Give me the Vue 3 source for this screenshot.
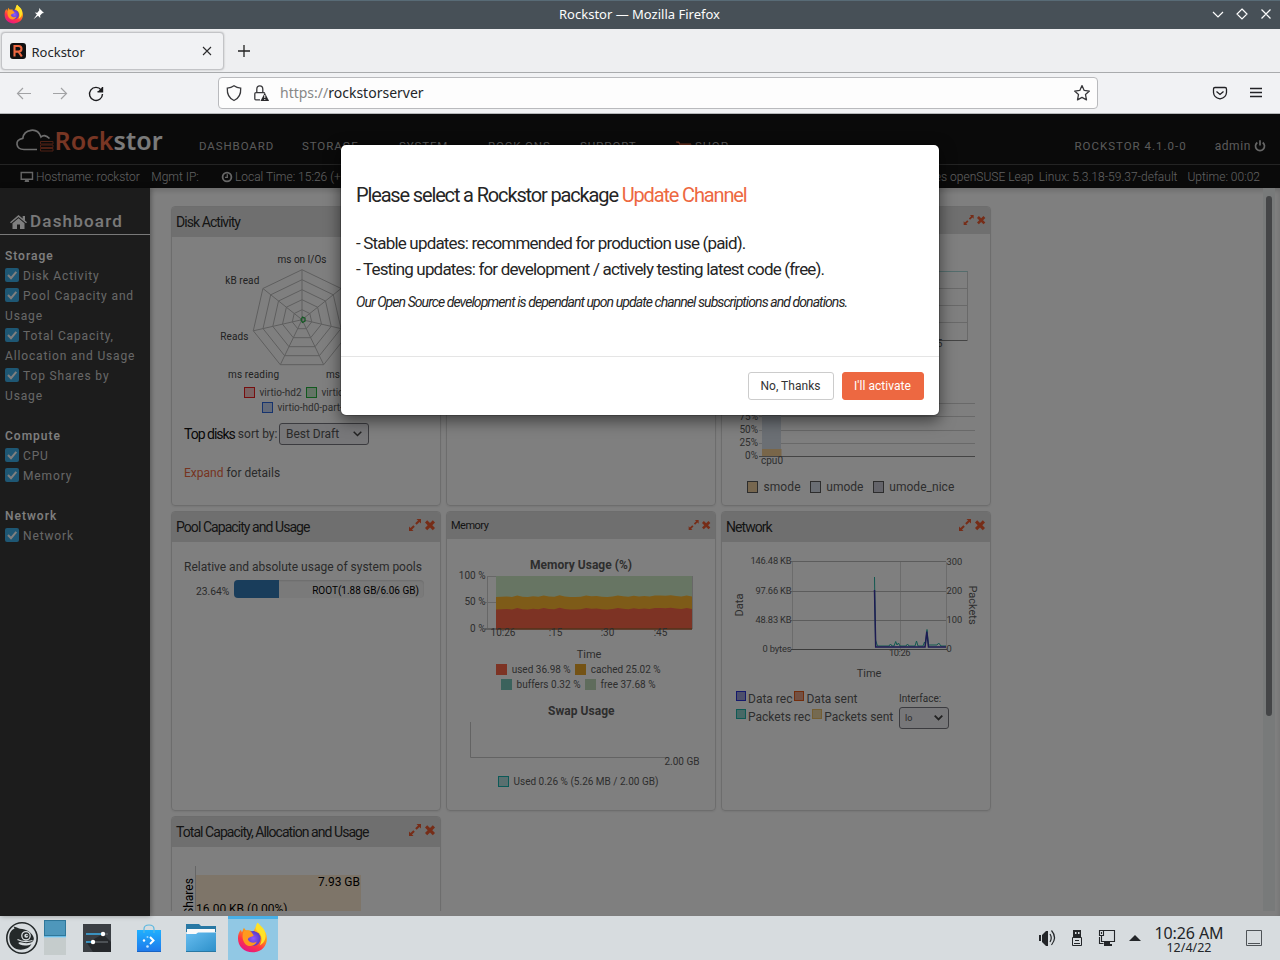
<script setup>
const menu = [
  { label: 'DASHBOARD' },
  { label: 'STORAGE', caret: true },
  { label: 'SYSTEM', caret: true },
  { label: 'ROCK-ONS' },
  { label: 'SUPPORT', caret: true },
  { label: 'SHOP', cart: true },
]

const sections = [
  { title: 'Storage', items: ['Disk Activity', 'Pool Capacity and Usage', 'Total Capacity, Allocation and Usage', 'Top Shares by Usage'] },
  { title: 'Compute', items: ['CPU', 'Memory'] },
  { title: 'Network', items: ['Network'] },
]

const radarPoint = (k, r) => {
  const a = (k * 2 * Math.PI) / 7
  return [302 + r * Math.sin(a), 319.7 - r * Math.cos(a)]
}
const axes = [0, 1, 2, 3, 4, 5, 6]
const rings = [10, 20, 30, 40, 50].map((r) => axes.map((k) => radarPoint(k, r).map((v) => v.toFixed(1)).join(',')).join(' '))
const spokes = axes.map((k) => radarPoint(k, 50))

const wobble = [0, 0.2, 0.6, 0, 1.6, 0.2, 0, 0.7, 0.3, 1.4, 0.4, 0.2, 1.8, 0.6, 0, 0, 0.2, 1.6, 0.8, 0.9, 0.2, 0, 0.4, 1.5, 0.8, 0.2, 1.2, 0.6, 1, 0.6, 1.4, 1.6, 1.2, 1.8, 1, 0.6, 1.4, 0.4]
const area = (base) =>
  'M496 628.5 ' + wobble.map((w, i) => `L${(496 + (i * 196) / (wobble.length - 1)).toFixed(1)} ${(base - w).toFixed(1)}`).join(' ') + ' L692 628.5Z'
</script>

<template>
  <div class="desktop">
    <header class="titlebar">
      <svg class="tb-left" viewBox="0 0 50 29" width="50" height="29">
        <defs>
          <linearGradient id="fxg" x1=".8" y1="0" x2=".3" y2="1">
            <stop offset="0" stop-color="#fff44f" /><stop offset=".4" stop-color="#ff980e" /><stop offset=".7" stop-color="#ff3647" /><stop offset="1" stop-color="#e31587" />
          </linearGradient>
          <radialGradient id="fxp"><stop offset="0" stop-color="#9059ff" /><stop offset="1" stop-color="#5b3bc4" /></radialGradient>
          <symbol id="fox" viewBox="0 0 32 32">
            <path d="M19 5C20 3 20 2 21 1C24 5 27 7 29 11C33 20 28 31 16 31C7 31 1 25 1 17C1 13 2 10 4 8L5 11L7 6L9 9C13 8 15 9 16 11C17 9 18 7 19 5Z" fill="url(#fxg)" />
            <circle cx="16.5" cy="17" r="7.5" fill="url(#fxp)" />
            <path d="M7 9C10 9 13 9 15 11L17 14C15 16 12 15 11 18C13 22 18 22 20 20C19 24 12 27 8 22C5 18 5 13 7 9Z" fill="#ff9a1e" />
            <path d="M21 1C17 7 20 9 23 12C26 16 25 21 23 24C31 20 30 10 26 6Z" fill="#ffe226" />
          </symbol>
        </defs>
        <use href="#fox" x="4" y="4" width="20" height="20" />
        <path d="M39 8l5 5-1.800.300-2.100 2.100.200 2.600-2.300-2.200-4.500 3.500 3.400-4.700-2.100-2.100 2.500.200 2-2.400Z" fill="#fff" />
      </svg>
      <span class="tb-title">Rockstor — Mozilla Firefox</span>
      <svg class="tb-right" viewBox="1200 0 80 29" width="80" height="29" fill="none" stroke="#fcfcfc" stroke-width="1.2">
        <path d="M1213 12l5 5 5-5M1242 9l5 5-5 5-5-5ZM1261.500 9.500l9 9M1270.500 9.500l-9 9" />
      </svg>
    </header>

    <div class="tabs">
      <div class="tab">
        <svg width="16" height="16" viewBox="0 0 16 16"><rect width="16" height="16" rx="3" fill="#111" /><path d="M4.500 13.500V3H8.500Q11.500 3 11.500 5.800T8.500 8.600H5M8.500 8.600L11.800 13.500" fill="none" stroke="#ed6841" stroke-width="2.100" /></svg>
        <span>Rockstor</span>
        <svg class="tab-x" width="10" height="10" viewBox="0 0 10 10"><path d="M1 1l8 8M9 1l-8 8" stroke="#2b2b2d" stroke-width="1.100" /></svg>
      </div>
      <svg class="plus" width="12" height="12" viewBox="0 0 12 12"><path d="M6 0v12M0 6h12" stroke="#222" stroke-width="1.300" /></svg>
    </div>

    <div class="toolbar">
      <svg class="nav-icons" width="218" height="40" viewBox="0 73 218 40" fill="none">
        <path d="M31 93.500H17.500M23 88l-5.500 5.500 5.500 5.500M53 93.500H66.500M61 88l5.500 5.500-5.500 5.500" stroke="#a2a3a5" stroke-width="1.200" />
        <path d="M101.200 90A6.500 6.500 0 1 0 102.500 94M102.500 87v4.800H97.500" stroke="#1c1c1e" stroke-width="1.400" /><path d="M102.500 87v4.800h-4.800Z" fill="#1c1c1e" />
      </svg>
      <div class="url">
        <svg width="52" height="20" viewBox="226 83 52 20" fill="none" stroke="#39393c" stroke-width="1.300">
          <path d="M234 85.800C236 87.300 238 88 240.700 88.200C241 93.500 239.500 98 234 100.500C228.500 98 227 93.500 227.300 88.200C230 88 232 87.300 234 85.800Z" />
          <path d="M260 99.800h-4.200q-1 0-1-1v-5q0-1.200 1.200-1.200h7.500q1.200 0 1.200.8M256.800 92.500v-3.300q0-3.400 3-3.400t3 3.400v3.300" />
          <path d="M264.800 92.700l4.300 8.200h-8.600Z" fill="#2a2a2c" stroke="none" /><path d="M264.800 95v3M264.800 99v1" stroke="#fff" stroke-width="1" />
        </svg>
        <span class="addr"><i>https://</i>rockstorserver</span>
        <svg class="star" width="18" height="18" viewBox="0 0 18 18"><path d="M9 1.600l2.200 4.800 5.200.7-3.900 3.500 1 5.300L9 13.400l-4.500 2.500 1-5.300L1.600 7.100l5.200-.7Z" fill="none" stroke="#39393c" stroke-width="1.300" stroke-linejoin="round" /></svg>
      </div>
      <svg class="right-icons" width="60" height="40" viewBox="1206 73 60 40" fill="none" stroke="#222225" stroke-width="1.300">
        <path d="M1215 87.500h10q1.500 0 1.500 1.500v3.500q-.3 5-6.500 6.300q-6.200-1.300-6.500-6.300V89q0-1.500 1.500-1.500ZM1216.500 91.500l3.500 3 3.500-3M1250 88.500h12M1250 92.500h12M1250 96.500h12" />
      </svg>
    </div>

    <div class="page">
      <nav class="navbar">
        <svg class="logo" width="154" height="40" viewBox="12 120 154 40">
          <path d="M49.500 138.500C46 135 43 135 41 137C39 131.500 35 129.800 31 130.300C26 131 23.300 134 22.800 138.300C18.500 139 16.500 141.500 17 144.500C17.500 148 20 149.500 24 149.500H37" fill="none" stroke="#dadada" stroke-width="1.700" />
          <g fill="none" stroke="#9d4029" stroke-width="1"><path d="M40.500 141.500h12.500v2.500h-12.500ZM40.500 145h12.500v2.500h-12.500ZM40.500 148.500h12.500v2.500h-12.500Z" /></g>
          <text x="54.500" y="149.500" textLength="108" class="brand"><tspan fill="#f06d48">Rock</tspan><tspan fill="#f4f4f4">stor</tspan></text>
        </svg>
        <ul class="menu">
          <li v-for="m in menu" :key="m.label">
            <svg v-if="m.cart" width="16" height="12" viewBox="0 0 16 12"><path d="M0 1h3l2 7h8l2-5H4" fill="#ed6841" stroke="#ed6841" /><circle cx="6" cy="10.500" r="1.300" fill="#ed6841" /><circle cx="12" cy="10.500" r="1.300" fill="#ed6841" /></svg>
            {{ m.label }}<b v-if="m.caret" class="caret"></b>
          </li>
        </ul>
        <div class="account"><span class="ver">ROCKSTOR 4.1.0-0</span><span class="admin">admin</span>
          <svg width="12" height="12" viewBox="0 0 12 12" fill="none" stroke="#ccc" stroke-width="1.700"><path d="M3.300 2.500A4.500 4.500 0 1 0 8.700 2.500M6 .3V5.500" /></svg>
        </div>
      </nav>
      <div class="infobar">
        <svg width="14" height="12" viewBox="0 0 14 12"><path d="M1.200 1.500h11.300v6.800H1.200Z" fill="none" stroke="#ccc" stroke-width="1.400" /><path d="M5.500 8h3l.7 3H4.500Z" fill="#ccc" /></svg>
        <span class="host">Hostname: rockstor</span><span class="mgmt">Mgmt IP:</span>
        <svg width="12" height="12" viewBox="0 0 12 12" fill="none" stroke="#ccc"><circle cx="6" cy="6" r="4.400" stroke-width="1.800" /><path d="M6.300 3.300v3H4" stroke-width="1.300" /></svg>
        <span class="time">Local Time: 15:26 (+</span>
        <span class="os">Uses openSUSE Leap</span><span class="kernel">Linux: 5.3.18-59.37-default</span><span>Uptime: 00:02</span>
      </div>

      <div class="columns">
        <aside>
          <h2>
            <svg width="17" height="14" viewBox="0 0 17 14" fill="#fff"><path d="M8.500 0L17 7.200l-1 1.100L8.500 2 1 8.300 0 7.200ZM12.700 1H15v4.500l-2.300-2ZM8.500 3.200L14.500 8.200V14H10V9.500H7V14H2.500V8.200Z" /></svg>Dashboard
          </h2>
          <section v-for="s in sections" :key="s.title">
            <h3>{{ s.title }}</h3>
            <p v-for="i in s.items" :key="i">
              <svg width="14" height="14" viewBox="0 0 14 14"><rect width="14" height="14" rx="2" fill="#3daee9" /><path d="M3 7l3 3.200 5.300-6.300" fill="none" stroke="#fff" stroke-width="2" /></svg>{{ i }}
            </p>
          </section>
        </aside>

        <main>
          <div class="grid">
            <article class="card">
              <h4>Disk Activity</h4>
              <svg class="chart" width="268" height="178" viewBox="172 237 268 178">
                <g fill="none" stroke="#bdbdbd"><polygon v-for="(r, n) in rings" :key="n" :points="r" /><line v-for="(p, n) in spokes" :key="'s' + n" x1="302" y1="319.700" :x2="p[0]" :y2="p[1]" /></g>
                <path d="M302.500 317l2.500 1.200v3l-2.500 1.300-1.500-2.500Z" fill="none" stroke="#2db34a" stroke-width="1.300" />
                <g class="t10 dark"><text x="277.500" y="263" textLength="49">ms on I/Os</text><text x="225.300" y="284" textLength="34">kB read</text><text x="220.300" y="340" textLength="28">Reads</text><text x="228" y="378" textLength="51">ms reading</text><text x="326" y="378">ms writing</text></g>
                <g class="t10"><rect x="244.500" y="387.500" width="10" height="10" fill="#f6c9c9" stroke="#ed1c1c" /><text x="259.500" y="396" textLength="42">virtio-hd2</text><rect x="306.500" y="387.500" width="10" height="10" fill="#c8e8cd" stroke="#22b33d" /><text x="321.500" y="396">virtio-hd1</text><rect x="262.500" y="402.500" width="10" height="10" fill="#c9d7f3" stroke="#2c67dd" /><text x="277.500" y="411">virtio-hd0-part-3</text></g>
              </svg>
              <div class="sort"><strong>Top disks</strong><span>sort by:</span>
                <div class="select wide">Best Draft<svg width="9" height="6" viewBox="0 0 9 6"><path d="M.700.700l3.800 3.800L8.300.700" fill="none" stroke="#444" stroke-width="1.500" /></svg></div>
              </div>
              <p class="details"><a>Expand</a> for details</p>
            </article>

            <article class="card"><h4 class="small">Top Shares by Usage</h4></article>

            <article class="card">
              <h4 class="small">CPU<svg class="tools" width="23" height="10" viewBox="0 0 26 12"><path d="M7.500 0H12v4.500L10.500 3 7.700 5.800 6.200 4.300 9 1.500ZM0 7.500L1.500 9 4.300 6.200 5.800 7.700 3 10.500 4.500 12H0ZM16 3.500L18.200 1.300 21 4 23.800 1.300 26 3.500 23.300 6.200 26 9 23.800 11.200 21 8.500 18.200 11.200 16 9 18.700 6.200Z" fill="#ed5a30" /></svg></h4>
              <svg class="chart" width="268" height="270" viewBox="722 234 268 270">
                <g fill="none" stroke="#d3d3d3"><path d="M760 288.500h207M760 305.500h207M760 322.500h207M967.500 271v69M759 403.500h216M759 416.500h216M759 430.500h216M759 443.500h216" /></g>
                <path d="M760 271.500h207.500" stroke="#a8dada" /><path d="M760 340.500h207.500M759 456.500h216" stroke="#888" />
                <rect x="762" y="403" width="19" height="46" fill="#d6dfe8" /><rect x="762" y="449" width="19.500" height="7" fill="#f3cc92" />
                <g class="t10 end"><text x="758" y="420">75%</text><text x="758" y="433">50%</text><text x="758" y="446">25%</text><text x="758" y="459">0%</text><text x="942.500" y="347">:45</text></g>
                <text class="t10" x="761" y="464" textLength="22">cpu0</text>
                <g class="t12"><g stroke="#5a5a5a"><rect x="747.500" y="481.500" width="10" height="11" fill="#efcf9e" /><rect x="810.500" y="481.500" width="10" height="11" fill="#d4dde9" /><rect x="873.500" y="481.500" width="10" height="11" fill="#c9c9d4" /></g>
                  <text x="763.500" y="491" textLength="37">smode</text><text x="826.300" y="491" textLength="37">umode</text><text x="889.300" y="491" textLength="65">umode_nice</text></g>
              </svg>
            </article>

            <article class="card">
              <h4>Pool Capacity and Usage<svg class="tools" width="26" height="12" viewBox="0 0 26 12"><path d="M7.500 0H12v4.500L10.500 3 7.700 5.800 6.200 4.300 9 1.500ZM0 7.500L1.500 9 4.300 6.200 5.800 7.700 3 10.500 4.500 12H0ZM16 3.500L18.200 1.300 21 4 23.800 1.300 26 3.500 23.300 6.200 26 9 23.800 11.200 21 8.500 18.200 11.200 16 9 18.700 6.200Z" fill="#ed5a30" /></svg></h4>
              <p class="pool-note">Relative and absolute usage of system pools</p>
              <div class="pool"><span>23.64%</span><div class="bar"><div class="fill"></div><em>ROOT(1.88 GB/6.06 GB)</em></div></div>
            </article>

            <article class="card">
              <h4 class="small">Memory<svg class="tools" width="23" height="10" viewBox="0 0 26 12"><path d="M7.500 0H12v4.500L10.500 3 7.700 5.800 6.200 4.300 9 1.500ZM0 7.500L1.500 9 4.300 6.200 5.800 7.700 3 10.500 4.500 12H0ZM16 3.500L18.200 1.300 21 4 23.800 1.300 26 3.500 23.300 6.200 26 9 23.800 11.200 21 8.500 18.200 11.200 16 9 18.700 6.200Z" fill="#ed5a30" /></svg></h4>
              <svg class="chart" width="268" height="270" viewBox="447 539 268 270">
                <text class="t12 bold" x="530" y="569" textLength="102">Memory Usage (%)</text>
                <path d="M487 576.500h9M485 602.500h11M487.500 576v52M692.500 576v53" stroke="#cfcfcf" /><path d="M485 629h11" stroke="#777" />
                <rect x="496" y="576" width="196" height="52.500" fill="#cfebc7" /><path :d="area(597)" fill="#fdb730" /><path :d="area(609.500)" fill="#fb6648" /><path d="M496 629h196" stroke="#a4552a" stroke-width="1.300" />
                <g class="t10 end"><text x="485.500" y="579">100 %</text><text x="485.500" y="605">50 %</text><text x="485.500" y="632">0 %</text></g>
                <g class="t10 mid"><text x="503" y="636">10:26</text><text x="555.500" y="636">:15</text><text x="607.500" y="636">:30</text><text x="660.500" y="636">:45</text></g>
                <text class="t11 mid" x="589" y="658">Time</text>
                <rect x="496" y="664" width="11" height="11" fill="#fb6648" /><rect x="575" y="664" width="11" height="11" fill="#e9a72b" /><rect x="501" y="679" width="11" height="11" fill="#77c4b8" /><rect x="585" y="679" width="11" height="11" fill="#bfd9b8" />
                <g class="t10"><text x="511.700" y="673" textLength="59">used 36.98 %</text><text x="590.700" y="673" textLength="70">cached 25.02 %</text><text x="516.500" y="688" textLength="64">buffers 0.32 %</text><text x="600.500" y="688" textLength="55">free 37.68 %</text></g>
                <text class="t12 bold" x="548" y="715" textLength="66.500">Swap Usage</text>
                <path d="M470.500 722v35.500H668" fill="none" stroke="#c7c7c7" />
                <text class="t10" x="664.500" y="765" textLength="35">2.00 GB</text>
                <rect x="498.500" y="776.500" width="10" height="10" fill="#b4dede" stroke="#18b5b0" /><text class="t10" x="513.500" y="785" textLength="145">Used 0.26 % (5.26 MB / 2.00 GB)</text>
              </svg>
            </article>

            <article class="card">
              <h4>Network<svg class="tools" width="26" height="12" viewBox="0 0 26 12"><path d="M7.500 0H12v4.500L10.500 3 7.700 5.800 6.200 4.300 9 1.500ZM0 7.500L1.500 9 4.300 6.200 5.800 7.700 3 10.500 4.500 12H0ZM16 3.500L18.200 1.300 21 4 23.800 1.300 26 3.500 23.300 6.200 26 9 23.800 11.200 21 8.500 18.200 11.200 16 9 18.700 6.200Z" fill="#ed5a30" /></svg></h4>
              <svg class="chart" width="268" height="143" viewBox="722 542 268 143">
                <path d="M792.500 562v87M900.500 562v87M946.500 562v87" stroke="#d9d9d9" /><path d="M791 561.500h155M791 591.500h155M791 620.500h155" stroke="#b9b9b9" /><path d="M791 649.500h156" stroke="#777" />
                <path d="M874.500 577L875.500 640 877.500 646H889L890.500 644 892 646H894L895.700 641.500 897 645 898.500 643 900 646H906L907.500 644 909 646H915L916.500 641 918 646H923L924.500 642 925.500 644 927 629.500 928.500 645H937L938.700 643 941 646H946" fill="none" stroke="#22b0a0" />
                <path d="M874.500 590L875.700 647H925L926.800 631.500 928.500 647H946" fill="none" stroke="#3b36a6" stroke-width="1.500" />
                <g class="t9 end"><text x="791.500" y="564" textLength="41">146.48 KB</text><text x="791.500" y="594" textLength="36">97.66 KB</text><text x="791.500" y="623" textLength="36">48.83 KB</text><text x="791.500" y="652" textLength="29">0 bytes</text></g>
                <g class="t9"><text x="946.500" y="565">300</text><text x="946.500" y="594">200</text><text x="946.500" y="623">100</text><text x="946.500" y="652">0</text><text x="889" y="656" textLength="21.500">10:26</text></g>
                <text class="t11 mid" x="869" y="677">Time</text><text class="t11 mid" transform="translate(743 605) rotate(-90)">Data</text><text class="t11 mid" transform="translate(968.500 605) rotate(90)">Packets</text>
              </svg>
              <div class="net">
                <svg width="162" height="40" viewBox="734 687 162 40">
                  <g><rect x="736.500" y="691.500" width="9" height="9" fill="#9a9fd6" stroke="#2a32d8" /><rect x="794.500" y="691.500" width="9" height="9" fill="#e6a184" stroke="#e65a18" /><rect x="736.500" y="709.500" width="9" height="9" fill="#8fd3cd" stroke="#1fb5aa" /><rect x="812.500" y="709.500" width="9" height="9" fill="#ead4a2" stroke="#e8bd66" /></g>
                  <g class="t12"><text x="748" y="703" textLength="44.500">Data rec</text><text x="806.500" y="703" textLength="51">Data sent</text><text x="748" y="721" textLength="62.500">Packets rec</text><text x="824.300" y="721" textLength="69">Packets sent</text></g>
                </svg>
                <label>Interface:<div class="select lo">lo<svg width="9" height="6" viewBox="0 0 9 6"><path d="M.700.700l3.800 3.800L8.300.700" fill="none" stroke="#444" stroke-width="1.800" /></svg></div></label>
              </div>
            </article>

            <article class="card">
              <h4>Total Capacity, Allocation and Usage<svg class="tools" width="26" height="12" viewBox="0 0 26 12"><path d="M7.500 0H12v4.500L10.500 3 7.700 5.800 6.200 4.300 9 1.500ZM0 7.500L1.500 9 4.300 6.200 5.800 7.700 3 10.500 4.500 12H0ZM16 3.500L18.200 1.300 21 4 23.800 1.300 26 3.500 23.300 6.200 26 9 23.800 11.200 21 8.500 18.200 11.200 16 9 18.700 6.200Z" fill="#ed5a30" /></svg></h4>
              <svg class="chart" width="268" height="120" viewBox="172 847 268 120">
                <path d="M195.500 866v90" stroke="#ccc" /><rect x="196" y="875" width="165" height="60" fill="#fdebd2" />
                <g class="t12 black"><text x="318" y="886" textLength="42">7.93 GB</text><text x="196" y="913" textLength="91.500">16.00 KB (0.00%)</text><text transform="translate(193 915) rotate(-90)" textLength="37">Shares</text></g>
              </svg>
            </article>
          </div>
        </main>
        <div class="scroll"><div class="thumb"></div></div>
      </div>

      <div class="backdrop"></div>
      <div class="modal">
        <div class="modal-body">
          <h1>Please select a Rockstor package <a>Update Channel</a></h1>
          <p class="opt">- Stable updates: recommended for production use (paid).</p>
          <p class="opt second">- Testing updates: for development / actively testing latest code (free).</p>
          <p class="note">Our Open Source development is dependant upon update channel subscriptions and donations.</p>
        </div>
        <div class="modal-foot"><button>No, Thanks</button><button class="primary">I'll activate</button></div>
      </div>
    </div>

    <footer class="taskbar">
      <svg width="278" height="44" viewBox="0 916 278 44">
        <defs><linearGradient id="bag" x2="0" y2="1"><stop offset="0" stop-color="#1fb0ff" /><stop offset="1" stop-color="#1f78ea" /></linearGradient><linearGradient id="fold" x2="1" y2="1"><stop offset="0" stop-color="#67bdf0" /><stop offset="1" stop-color="#2c8fc9" /></linearGradient></defs>
        <circle cx="22" cy="938" r="15.200" fill="none" stroke="#24292a" stroke-width="1.600" />
        <path d="M9.500 940C8.500 934 11 930 14.500 928.500L13.500 926.500C16 927 18 928 20 928.800C26 929 32.500 932.500 33.800 938C34.300 943 28 944 22 942.500C18 941.500 17.500 943 20 944.500C24 946.500 28.500 945.500 31.500 944C28.500 950 18 952 12.500 946.500C10.500 944.500 9.800 942.500 9.500 940Z" fill="#24292a" />
        <circle cx="26" cy="935.800" r="4.200" fill="#24292a" stroke="#d7dcdf" stroke-width="1.300" /><circle cx="26.300" cy="935.800" r="2" fill="#d7dcdf" /><circle cx="27" cy="935.500" r=".8" fill="#24292a" /><path d="M17.500 939.500Q24 943 32.500 940.500" fill="none" stroke="#d7dcdf" stroke-width="1.200" />
        <rect x="44.500" y="920.500" width="21" height="15" fill="#4e97bb" stroke="#2f789b" /><rect x="44" y="936.300" width="22" height="1" fill="#3daee9" /><rect x="44" y="938" width="22" height="17" fill="#c5cccc" />
        <rect x="83" y="924" width="28" height="28" fill="#3b3f44" /><path d="M87 943L103 934 111 942V952H93Z" fill="#25282b" /><path d="M86 934h17M86 942h7" stroke="#3daee9" stroke-width="1.700" /><path d="M103 934h5M93 942h15" stroke="#5a5f64" stroke-width="1.700" /><circle cx="103" cy="934" r="2.200" fill="#fff" /><circle cx="93" cy="942" r="2.200" fill="#fff" />
        <rect x="137" y="930" width="24" height="22" fill="url(#bag)" /><path d="M137 951.500h24" stroke="#1763c4" /><path d="M144 933v-4q0-4 5-4t5 4v4" fill="none" stroke="#5bb8e0" stroke-width="1.200" /><path d="M150 937l3.500 3.500L150 944" fill="none" stroke="#fff" stroke-width="2" /><circle cx="144" cy="940.500" r="1.200" fill="#fff" /><circle cx="147.500" cy="937" r="1" fill="#9ed8ff" /><circle cx="147.500" cy="946.500" r="1.300" fill="#c9e8ff" />
        <path d="M186 924h13l2 2h15v6h-30Z" fill="#2878a4" /><path d="M187 929h28v6h-28Z" fill="#fafafa" /><path d="M186 934h10l2-1.500h18V952h-30Z" fill="url(#fold)" /><path d="M186 951.500h30" stroke="#2878a4" />
        <rect x="228" y="916" width="50" height="44" fill="#91c8e4" /><rect x="228" y="916" width="50" height="3" fill="#48b0e8" />
        <use href="#fox" x="237" y="921.500" width="31.500" height="32" />
      </svg>
      <svg class="tray" width="115" height="44" viewBox="1030 916 115 44">
        <path d="M1039 935h2v6h-2ZM1042 935l4-4h2v15h-2l-4-4Z" fill="#232629" /><path d="M1050 934q2.500 4 0 8M1051.500 930.500q6 7 0 14.500" fill="none" stroke="#232629" stroke-width="1.200" />
        <path d="M1073 930h8v7h-8Z" fill="#232629" /><path d="M1075 932h1.500v2H1075ZM1078 932h1.500v2H1078Z" fill="#d7dcdf" /><path d="M1072.500 937.500h9v8h-9ZM1075 940.500h4M1074 943.500h6" fill="none" stroke="#232629" />
        <path d="M1104 930.500h10.500v11h-13v-5.500M1099.500 930.500h4v5h-4ZM1101.500 932v2M1099.500 937v6.500h4" fill="none" stroke="#232629" stroke-width="1.100" /><path d="M1104 941h6v3h2v2h-8Z" fill="#232629" />
        <path d="M1129 941l6-6 6 6Z" fill="#232629" />
      </svg>
      <div class="clock"><b>10:26 AM</b><small>12/4/22</small></div>
      <svg class="peek" width="16" height="16" viewBox="0 0 16 16" fill="none" stroke="#4e5357"><path d="M.5.500h15v15H.500ZM2 13.500h12" /></svg>
    </footer>
  </div>
</template>

<style>
body { margin: 0; overflow: hidden; }
</style>

<style scoped>
* { box-sizing: border-box; }
.desktop { width: 1280px; height: 960px; overflow: hidden; display: flex; flex-direction: column; font-family: Roboto, "Noto Sans", sans-serif; font-size: 12px; color: #555; }
h1, h2, h3, h4, p, ul { margin: 0; padding: 0; font-weight: 400; }
svg { flex: none; }
.titlebar { height: 29px; background: #475057; border-top: 1px solid #586b76; display: flex; justify-content: space-between; align-items: center; color: #fcfcfc; font: 13px "Noto Sans", sans-serif; }
.tb-left { margin-right: 30px; }
.titlebar svg { margin-top: -1px; }
.tb-title { margin: -2px 1px 0 0; }
.tabs { height: 44px; background: #eeeff1; border-bottom: 1px solid #a9abad; display: flex; align-items: center; font: 13px "Noto Sans", sans-serif; color: #232629; }
.tab { width: 223px; height: 38px; margin: 1px 0 0 1px; border: 1px solid #c3c4c7; box-shadow: 0 0 2px rgba(0,0,0,.25); border-radius: 4px; background: #f1f2f4; display: flex; align-items: center; padding: 0 11px 0 8px; }
.tab span { margin: 2px 0 0 5.500px; flex: 1; }
.plus { margin: 1px 0 0 14px; }
.toolbar { height: 41px; background: #f1f2f4; border-bottom: 1px solid #b5b7b9; display: flex; align-items: center; }
.url { width: 880px; height: 32px; border: 1px solid #b9babd; border-radius: 4px; background: #fdfdfd; display: flex; align-items: center; padding-left: 7px; }
.addr { margin: -1px 0 0 2px; flex: 1; font: 14px "Noto Sans", sans-serif; color: #232629; }
.addr i { font-style: normal; color: #888; }
.star { margin-right: 6px; }
.right-icons { margin-left: auto; margin-right: 14px; }

.page { height: 802px; position: relative; background: #fff; display: flex; flex-direction: column; }
.navbar { height: 51px; background: #141414; border-bottom: 1px solid #484848; display: flex; color: #b4b4b4; }
.logo { margin: 6px 0 0 12px; }
.brand { font: 600 25px "Noto Sans", sans-serif; }
.menu { list-style: none; margin: 24px 0 0 33px; display: grid; align-content: start; grid-template-columns: 103px 97px 89px 92px 96px 70px; font-size: 11.500px; letter-spacing: .9px; line-height: 17px; }
.menu li { display: flex; align-items: center; height: 17px; white-space: nowrap; }
.menu svg { margin-right: 3px; }
.caret { border: 4px solid transparent; border-top-color: #aaa; border-bottom: 0; margin-left: 2px; }
.account { display: flex; margin: 23px 14px 0 auto; align-items: center; height: 17px; letter-spacing: 1px; }
.ver { font-size: 11.500px; margin-right: 28px; }
.admin { margin-right: 3px; letter-spacing: .6px; }
.infobar { height: 23px; background: #141414; display: flex; align-items: center; padding: 1px 20px 0; color: #c2c2c2; font-weight: 300; white-space: pre; }
.host { margin: 0 11.500px 0 2px; }
.mgmt { margin-right: 22px; }
.time { margin-left: 2px; }
.os { margin: 0 5px 0 auto; }
.kernel { margin-right: 10px; }
.columns { height: 728px; display: flex; position: relative; box-shadow: inset 0 3px 5px rgba(0,0,0,.15); }
aside { width: 150px; background: #393939; color: #cfcfcf; letter-spacing: .86px; line-height: 20px; box-shadow: 1px 0 5px rgba(0,0,0,.35); }
aside h2 { height: 47px; border-bottom: 1px solid #f2f2f2; padding: 21px 0 0 10px; font-size: 17px; line-height: 25px; font-weight: 500; letter-spacing: 1.200px; color: #f3f3f3; display: flex; align-items: center; gap: 3px; }
aside section { padding: 10px 4px 10px 5px; }
aside h3 { font-size: 12px; line-height: 20px; font-weight: 500; letter-spacing: 1px; color: #fff; padding-top: 1px; height: 20px; }
aside p { position: relative; top: 1px; }
aside p svg { vertical-align: -2px; margin-right: 4px; }
main { width: 1112px; height: 723px; overflow: hidden; padding: 18px 0 0 21px; }
.grid { display: grid; grid-template-columns: repeat(3, 270px); grid-auto-rows: 300px; gap: 5px; }
.card { border: 1px solid #dadada; border-radius: 4px; box-shadow: 0 1px 2px rgba(0,0,0,.08); overflow: hidden; }
.card h4 { height: 30px; background: #dedede; font-size: 14px; letter-spacing: -.94px; line-height: 30px; color: #2b2b2b; padding: 0 5px 0 4px; display: flex; justify-content: space-between; white-space: nowrap; }
.card h4.small { height: 27px; font-size: 11px; letter-spacing: -.5px; line-height: 27px; padding-right: 4px; }
.tools { margin-top: 7px; }
.small .tools { margin-top: 8px; }
.chart { display: block; }
.chart text, .net text { fill: #5c5c5c; }
.t9 { font-size: 9.300px; }
.t10 { font-size: 10px; }
.t11 { font-size: 11px; }
.t12 { font-size: 12px; }
.bold { font-weight: 700; }
.end { text-anchor: end; }
.mid { text-anchor: middle; }
.chart .dark text { fill: #444; }
.chart .black text { fill: #000; }
.sort { display: flex; align-items: center; height: 40px; padding-left: 12px; margin-top: -1px; }
.sort strong { font-size: 14px; font-weight: 400; letter-spacing: -1px; color: #111; margin-right: 3px; }
.select { border: 1px solid #77777f; border-radius: 3px; background: #eeeef2; display: flex; align-items: center; justify-content: space-between; }
.wide { width: 90px; height: 22px; padding: 0 6px 0 5.500px; margin-left: 2px; }
.details { padding: 12px 0 0 12px; line-height: 14px; }
.details a { color: #ed6841; }
.pool-note { padding: 17px 0 0 12px; line-height: 16px; white-space: nowrap; }
.pool { display: flex; align-items: center; margin: 5px 0 0 24px; font-size: 10.300px; }
.pool span { width: 38px; padding-top: 4px; }
.bar { width: 190px; height: 18px; border-radius: 4px; background: #f5f5f5; box-shadow: inset 0 1px 2px rgba(0,0,0,.12); display: flex; justify-content: space-between; overflow: hidden; }
.fill { width: 45px; background: #337ab7; }
.bar em { font-style: normal; color: #000; line-height: 21px; padding-right: 5px; font-size: 10px; }
.net { display: flex; padding: 2px 0 0 12px; gap: 3px; }
.net label { font-size: 10px; display: flex; flex-direction: column; line-height: 12px; padding-top: 6px; gap: 2px; }
.lo { width: 50px; height: 22px; padding: 0 5px; font-size: 9px; }
.scroll { width: 12px; height: 723px; background: #f1f4f4; margin-left: 1px; padding: 8px 3px 0; }
.thumb { width: 6px; height: 520px; border-radius: 3px; background: #888b8e; }
.backdrop { position: absolute; inset: 0; background: rgba(0,0,0,.5); }
.modal { position: absolute; left: 340px; top: 30px; width: 600px; height: 272px; border: 1px solid rgba(0,0,0,.2); border-radius: 6px; background: #fff; background-clip: padding-box; box-shadow: 0 5px 15px rgba(0,0,0,.5); color: #252525; white-space: nowrap; }
.modal-body { height: 212px; padding: 36px 15px 0; border-bottom: 1px solid #e5e5e5; }
.modal h1 { font-size: 20px; line-height: 28px; letter-spacing: -1.150px; }
.modal a { color: #ed6841; }
.opt { font-size: 17px; letter-spacing: -.82px; line-height: 26px; margin-top: 21px; }
.opt.second { margin-top: 0; }
.note { font-size: 14px; font-style: italic; letter-spacing: -.925px; line-height: 20px; margin-top: 10px; }
.modal-foot { display: flex; justify-content: flex-end; gap: 8px; padding: 15px 15px 0; }
button { width: 86px; height: 28px; border: 1px solid #ccc; border-radius: 3px; background: #fff; color: #333; font: 12px Roboto, sans-serif; letter-spacing: .05px; padding: 0 1px 0 0; }
.primary { width: 82px; background: #ed6841; border-color: #ed6841; color: #fff; }
.taskbar { height: 44px; background: #d7dcdf; display: flex; align-items: center; font-family: "Noto Sans", sans-serif; color: #232629; }
.tray { margin-left: auto; }
.clock { width: 88px; display: flex; flex-direction: column; align-items: center; }
.clock b { font-weight: 400; font-size: 16px; line-height: 18px; letter-spacing: -.1px; padding-top: 1px; }
.clock small { font-size: 12.500px; line-height: 12px; }
.peek { margin: 0 18px 0 13px; }
</style>
